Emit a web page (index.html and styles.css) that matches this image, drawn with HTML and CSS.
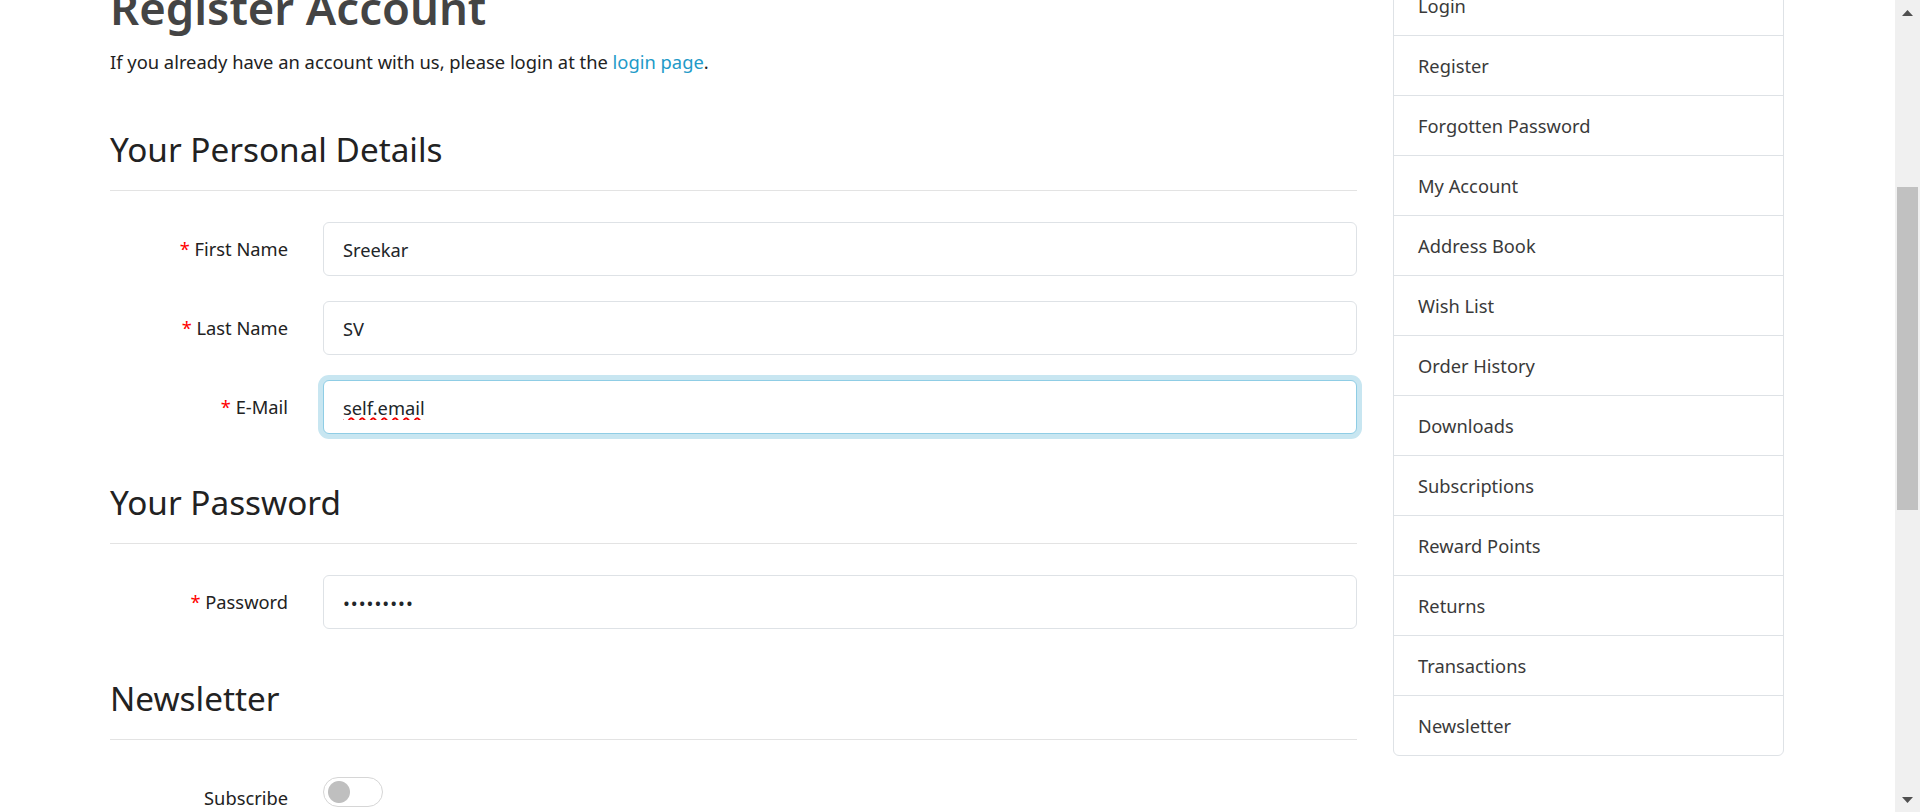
FILE: index.html
```html
<!DOCTYPE html>
<html lang="en">
<head>
<meta charset="utf-8">
<title>Register Account</title>
<link rel="stylesheet" href="styles.css">
</head>
<body>
<div class="window">
  <div class="viewport">
    <div class="container">
      <div class="row">
        <main class="content">
          <h1>Register Account</h1>
          <p class="intro">If you already have an account with us, please login at the <a href="#">login page</a>.</p>
          <form class="register-form">
            <fieldset class="group group-first">
              <legend>Your Personal Details</legend>
              <div class="form-row">
                <label for="firstname"><span class="star">*</span> First Name</label>
                <input id="firstname" class="form-control" type="text" value="Sreekar" spellcheck="false">
              </div>
              <div class="form-row">
                <label for="lastname"><span class="star">*</span> Last Name</label>
                <input id="lastname" class="form-control" type="text" value="SV" spellcheck="false">
              </div>
              <div class="form-row">
                <label for="email"><span class="star">*</span> E-Mail</label>
                <input id="email" class="form-control is-focused misspelled" type="text" value="self.email" spellcheck="false">
              </div>
            </fieldset>
            <fieldset class="group">
              <legend>Your Password</legend>
              <div class="form-row">
                <label for="password"><span class="star">*</span> Password</label>
                <input id="password" class="form-control password" type="password" value="123456789">
              </div>
            </fieldset>
            <fieldset class="group group-last">
              <legend>Newsletter</legend>
              <div class="form-row form-row-switch">
                <label for="newsletter">Subscribe</label>
                <input id="newsletter" class="switch" type="checkbox" role="switch">
              </div>
            </fieldset>
          </form>
        </main>
        <aside class="sidebar">
          <nav class="list-group">
            <a href="#">Login</a>
            <a href="#">Register</a>
            <a href="#">Forgotten Password</a>
            <a href="#">My Account</a>
            <a href="#">Address Book</a>
            <a href="#">Wish List</a>
            <a href="#">Order History</a>
            <a href="#">Downloads</a>
            <a href="#">Subscriptions</a>
            <a href="#">Reward Points</a>
            <a href="#">Returns</a>
            <a href="#">Transactions</a>
            <a href="#">Newsletter</a>
          </nav>
        </aside>
      </div>
    </div>
  </div>
  <div class="scrollbar" aria-hidden="true">
    <div class="sb-button">
      <svg width="11" height="6" viewBox="0 0 11 6"><path d="M5.5 0 L11 6 L0 6 Z" fill="#505050"/></svg>
    </div>
    <div class="sb-track">
      <div class="sb-thumb"></div>
    </div>
    <div class="sb-button">
      <svg width="11" height="6" viewBox="0 0 11 6"><path d="M0 0 L11 0 L5.5 6 Z" fill="#505050"/></svg>
    </div>
  </div>
</div>
</body>
</html>
```
FILE: styles.css
```css
html, body {
  margin: 0;
  height: 100%;
  overflow: hidden;
  background: #fff;
}

body {
  font-family: "Noto Sans", "Open Sans", sans-serif;
  font-size: 18.3px;
  color: #222;
}

.window {
  display: flex;
  height: 812px;
}

.viewport {
  flex: 1;
  min-width: 0;
  overflow: hidden;
}

.container {
  padding: 0 111px 0 110px;
}

.row {
  display: flex;
  align-items: flex-start;
  gap: 36px;
  margin-top: -25px;
}

.content {
  flex: 1;
  min-width: 0;
}

.sidebar {
  width: 391px;
  flex: none;
}

h1 {
  margin: 6px 0 0;
  font-size: 45.4px;
  line-height: 53px;
  font-weight: 600;
  color: #444;
}

.intro {
  margin: 13px 0 0;
  line-height: 30px;
  font-size: 18.35px;
}

.intro a {
  color: #229ac8;
  text-decoration: none;
}

.register-form {
  margin: 0;
}

.group {
  border: 0;
  margin: 21px 0 0;
  padding: 0;
  min-width: 0;
}

.group-first {
  margin-top: 50px;
}

.group-last {
  margin-top: 22px;
}

legend {
  float: left;
  width: 100%;
  padding: 0 0 18px;
  margin: 0 0 31px;
  font-size: 33.3px;
  line-height: 45px;
  font-weight: 400;
  color: #222;
  border-bottom: 1px solid #e3e3e3;
}

legend + * {
  clear: left;
}

.form-row {
  display: flex;
  align-items: center;
  gap: 35px;
  margin-bottom: 25px;
}

.form-row label {
  flex: none;
  width: 178px;
  text-align: right;
  line-height: 54px;
}

.star {
  color: #f00;
}

.form-control {
  flex: 1;
  min-width: 0;
  height: 54px;
  box-sizing: border-box;
  border: 1px solid #dee2e6;
  border-radius: 6px;
  padding: 0 19px;
  font: inherit;
  color: #212529;
  background: #fff;
  outline: none;
  margin: 0;
}

.form-control.password {
  letter-spacing: 1px;
}

.form-control.is-focused {
  border-color: #8fcde5;
  box-shadow: 0 0 0 5px #c8e6f1;
}

.form-control.misspelled {
  text-decoration: underline wavy #f00000;
  text-decoration-thickness: 1.5px;
  text-underline-offset: 2px;
}

.form-row-switch {
  align-items: flex-start;
}

.switch {
  appearance: none;
  -webkit-appearance: none;
  flex: none;
  width: 60px;
  height: 30px;
  margin: 6px 0 0;
  box-sizing: border-box;
  border: 1px solid #d6d6d6;
  border-radius: 15px;
  background: radial-gradient(circle at 15px 50%, #bfbfbf 0, #bfbfbf 10.5px, #fff 11.5px);
}

.list-group {
  display: flex;
  flex-direction: column;
  border: 1px solid #dee2e6;
  border-radius: 6px;
  overflow: hidden;
}

.list-group a {
  display: block;
  height: 59px;
  line-height: 59px;
  padding: 0 24px;
  color: #3a3a3a;
  text-decoration: none;
  border-top: 1px solid #dee2e6;
}

.list-group a:first-child {
  border-top: 0;
}

.scrollbar {
  flex: none;
  width: 25px;
  height: 812px;
  background: #f0f0f0;
  display: flex;
  flex-direction: column;
}

.sb-button {
  height: 25px;
  display: flex;
  align-items: center;
  justify-content: center;
}

.sb-track {
  flex: 1;
  display: flex;
  justify-content: center;
}

.sb-thumb {
  width: 21px;
  height: 323px;
  margin-top: 162px;
  background: #c1c1c1;
}
```
